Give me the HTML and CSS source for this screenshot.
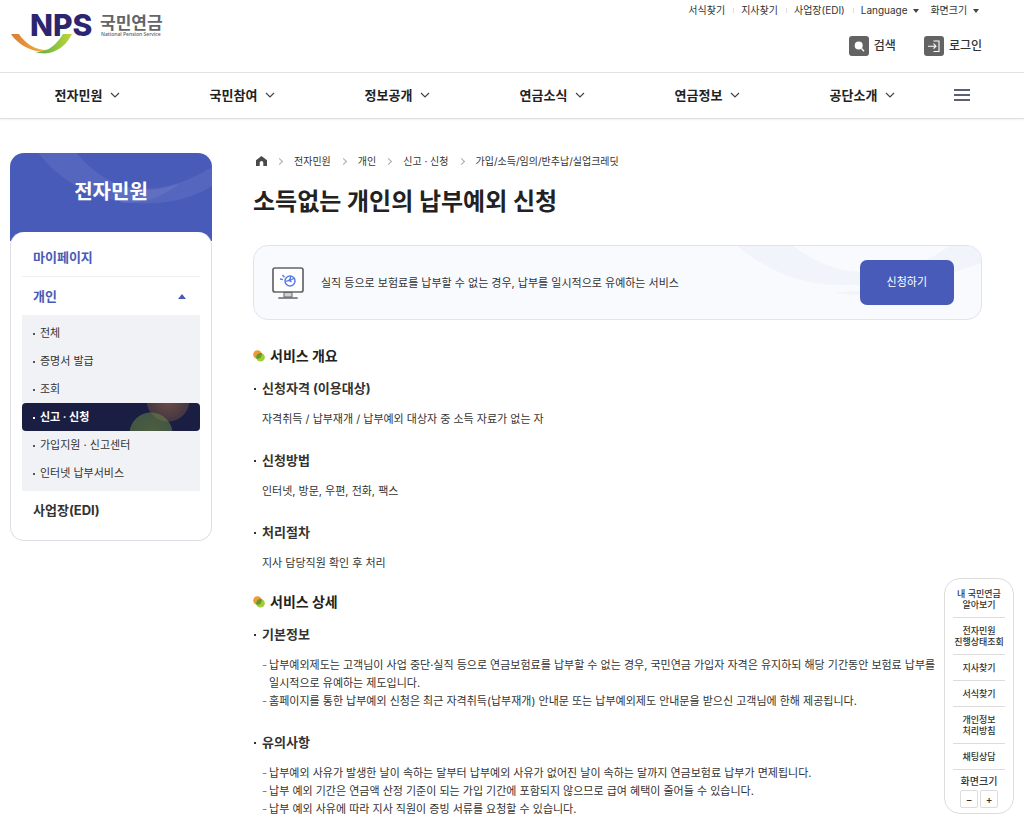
FILE: index.html
```html
<!DOCTYPE html>
<html lang="ko">
<head>
    <meta charset="UTF-8">
    <meta name="viewport" content="width=device-width, initial-scale=1.0">
    <title>소득없는 개인의 납부예외 신청 | 국민연금</title>
    <link rel="stylesheet" href="styles.css">
</head>
<body>
    <header class="header">
        <div class="header-top">
            <a href="#" class="logo" aria-label="국민연금">
                <svg width="160" height="54" viewBox="0 0 160 54">
                    <defs>
                        <linearGradient id="orange"><stop offset="0" stop-color="#dd7a32"/><stop offset="1" stop-color="#f3bd42"/></linearGradient>
                        <linearGradient id="green"><stop offset="0" stop-color="#4fad45"/><stop offset="1" stop-color="#c0d63c"/></linearGradient>
                    </defs>
                    <path d="M1 32h8c6 9 16 17 31 16-4 2-9 2-14 1C15 46 6 40 1 32z" fill="url(#orange)"/>
                    <path d="M62 32h-9c-5 8-11 15-20 17-3 1-6 1-8 1 4 1 9 2 14 1 10-2 18-9 23-19z" fill="url(#green)"/>
                    <text class="logo-nps" x="20" y="34">NPS</text>
                    <text class="logo-name" x="90" y="27">국민연금</text>
                    <text class="logo-eng" x="91" y="34">National Pension Service</text>
                </svg>
            </a>
            <div class="header-side">
                <ul class="util">
                    <li><a href="#">서식찾기</a></li>
                    <li><a href="#">지사찾기</a></li>
                    <li><a href="#">사업장(EDI)</a></li>
                    <li><button type="button">Language <i class="caret"></i></button></li>
                    <li><button type="button">화면크기 <i class="caret"></i></button></li>
                </ul>
                <div class="member">
                    <button type="button">
                        <svg width="20" height="20" viewBox="0 0 20 20"><rect width="20" height="20" rx="3" fill="#636363"/><circle cx="9.700" cy="9.500" r="4" fill="#fff"/><path d="M12.500 12.500l2.500 2.700" stroke="#fff" stroke-width="1.300"/></svg>
                        검색
                    </button>
                    <a href="#">
                        <svg width="20" height="20" viewBox="0 0 20 20"><rect width="20" height="20" rx="3" fill="#636363"/><path d="M9.500 5h5.500v10.500H9.500M4 10.200h8M9.500 7.700l2.500 2.500-2.500 2.500" fill="none" stroke="#fff" stroke-width="1.100"/></svg>
                        로그인
                    </a>
                </div>
            </div>
        </div>
        <nav class="gnb">
            <a href="#">전자민원 <svg class="chevron" viewBox="0 0 10 6"><path d="M1 1l4 4 4-4"/></svg></a>
            <a href="#">국민참여 <svg class="chevron" viewBox="0 0 10 6"><path d="M1 1l4 4 4-4"/></svg></a>
            <a href="#">정보공개 <svg class="chevron" viewBox="0 0 10 6"><path d="M1 1l4 4 4-4"/></svg></a>
            <a href="#">연금소식 <svg class="chevron" viewBox="0 0 10 6"><path d="M1 1l4 4 4-4"/></svg></a>
            <a href="#">연금정보 <svg class="chevron" viewBox="0 0 10 6"><path d="M1 1l4 4 4-4"/></svg></a>
            <a href="#">공단소개 <svg class="chevron" viewBox="0 0 10 6"><path d="M1 1l4 4 4-4"/></svg></a>
            <button type="button" class="all-menu" aria-label="전체메뉴">
                <svg width="16" height="12" viewBox="0 0 16 12"><path d="M0 1h16M0 6h16M0 11h16" stroke="#262e42" stroke-width="1.500"/></svg>
            </button>
        </nav>
    </header>

    <div class="container">
        <!-- 좌측 메뉴 -->
        <aside class="lnb">
            <div class="lnb-title">
                <svg class="lnb-deco" viewBox="0 0 200 88" preserveAspectRatio="none"><path d="M28 0C56 37 104 56 156 49c18-3 34-9 44-16V14c-28 18-58 26-86 19C94 28 78 15 66 0z"/><path d="M110 50c28 0 44-8 58-20-22 10-50 9-70-1z"/></svg>
                <h2>전자민원</h2>
            </div>
            <div class="lnb-body">
                <a href="#" class="lnb-link blue">마이페이지</a>
                <a href="#" class="lnb-link blue open">개인 <i class="arrow-up"></i></a>
                <ul class="lnb-sub">
                    <li><a href="#">전체</a></li>
                    <li><a href="#">증명서 발급</a></li>
                    <li><a href="#">조회</a></li>
                    <li><a href="#" class="active">신고 · 신청</a></li>
                    <li><a href="#">가입지원 · 신고센터</a></li>
                    <li><a href="#">인터넷 납부서비스</a></li>
                </ul>
                <a href="#" class="lnb-link">사업장(EDI)</a>
            </div>
        </aside>

        <!-- 본문 -->
        <main class="content">
            <ol class="breadcrumb">
                <li><a href="#" aria-label="홈"><svg width="11" height="10" viewBox="0 0 11 10"><path d="M5.500 0L0 4.300V10h3.700V6.800a1.800 1.800 0 0 1 3.600 0V10H11V4.300z" fill="#4a4a4a"/></svg></a></li>
                <li><a href="#">전자민원</a></li>
                <li><a href="#">개인</a></li>
                <li><a href="#">신고 · 신청</a></li>
                <li><a href="#">가입/소득/임의/반추납/실업크레딧</a></li>
            </ol>
            <h1>소득없는 개인의 납부예외 신청</h1>

            <div class="apply-box">
                <svg class="apply-deco" viewBox="0 0 244 74"><path d="M0 0c30 24 64 39 102 39 58 0 102-6 142-22V0h-32c-20 16-50 26-84 26C100 26 76 15 56 0z"/><path d="M96 47q30-4 60 0-30 4-60 0z"/></svg>
                <svg width="32" height="32" viewBox="0 0 32 32" fill="none">
                    <rect x="1" y="1" width="30" height="24" rx="2" fill="#fff" stroke="#636569" stroke-width="1.700"/>
                    <path d="M12 25.500h8v4.500h-8z" fill="#cfd1d5" stroke="#636569"/>
                    <path d="M7 31h18" stroke="#636569" stroke-width="1.700" stroke-linecap="round"/>
                    <circle cx="18" cy="14" r="5" stroke="#5a7be4" stroke-width="1.500"/>
                    <path d="M13.500 14c3 .5 5.500-1.500 5-5M17 14l5.500-3M17.500 13.500l2 1.500M8 12l3 .6M10.500 8l2 2.200" stroke="#5a7be4" stroke-width="1.400"/>
                </svg>
                <p>실직 등으로 보험료를 납부할 수 없는 경우, 납부를 일시적으로 유예하는 서비스</p>
                <a href="#" class="apply-button">신청하기</a>
            </div>

            <section>
                <h2><svg class="dots" viewBox="0 0 12 12"><circle cx="4.500" cy="4.500" r="4.300" fill="#ec9a3a"/><circle cx="7.500" cy="7.200" r="4.300" fill="#a5cb3b"/><path d="M3.200 7.200a4.300 4.300 0 0 1 5.500-4.100 4.300 4.300 0 0 1-5.300 5.500z" fill="#5f9a2c"/></svg>서비스 개요</h2>
                <h3>신청자격 (이용대상)</h3>
                <p>자격취득 / 납부재개 / 납부예외 대상자 중 소득 자료가 없는 자</p>
                <h3>신청방법</h3>
                <p>인터넷, 방문, 우편, 전화, 팩스</p>
                <h3>처리절차</h3>
                <p>지사 담당직원 확인 후 처리</p>
            </section>

            <section>
                <h2><svg class="dots" viewBox="0 0 12 12"><circle cx="4.500" cy="4.500" r="4.300" fill="#ec9a3a"/><circle cx="7.500" cy="7.200" r="4.300" fill="#a5cb3b"/><path d="M3.200 7.200a4.300 4.300 0 0 1 5.500-4.100 4.300 4.300 0 0 1-5.300 5.500z" fill="#5f9a2c"/></svg>서비스 상세</h2>
                <h3>기본정보</h3>
                <ul class="dash-list">
                    <li>납부예외제도는 고객님이 사업 중단·실직 등으로 연금보험료를 납부할 수 없는 경우, 국민연금 가입자 자격은 유지하되 해당 기간동안 보험료 납부를 일시적으로 유예하는 제도입니다.</li>
                    <li>홈페이지를 통한 납부예외 신청은 최근 자격취득(납부재개) 안내문 또는 납부예외제도 안내문을 받으신 고객님에 한해 제공됩니다.</li>
                </ul>
                <h3>유의사항</h3>
                <ul class="dash-list">
                    <li>납부예외 사유가 발생한 날이 속하는 달부터 납부예외 사유가 없어진 날이 속하는 달까지 연금보험료 납부가 면제됩니다.</li>
                    <li>납부 예외 기간은 연금액 산정 기준이 되는 가입 기간에 포함되지 않으므로 급여 혜택이 줄어들 수 있습니다.</li>
                    <li>납부 예외 사유에 따라 지사 직원이 증빙 서류를 요청할 수 있습니다.</li>
                </ul>
            </section>
        </main>
    </div>

    <!-- 퀵메뉴 -->
    <aside class="quick">
        <a href="#">내 국민연금<br>알아보기</a>
        <a href="#">전자민원<br>진행상태조회</a>
        <a href="#">지사찾기</a>
        <a href="#">서식찾기</a>
        <a href="#">개인정보<br>처리방침</a>
        <a href="#">채팅상담</a>
        <div class="zoom">
            <span>화면크기</span>
            <div class="zoom-buttons">
                <button type="button" aria-label="축소">−</button>
                <button type="button" aria-label="확대">+</button>
            </div>
        </div>
    </aside>
</body>
</html>
```
FILE: styles.css
```css
* {
    box-sizing: border-box;
    margin: 0;
    padding: 0;
}
body {
    background-color: #fff;
    color: #333;
    font-family: Inter, "Noto Sans CJK KR", sans-serif;
    font-size: 11px;
    line-height: 18px;
    word-break: keep-all;
}
a {
    color: inherit;
    text-decoration: none;
}
ul,
ol {
    list-style: none;
}
button {
    border: none;
    background: none;
    color: inherit;
    font: inherit;
    cursor: pointer;
}

/* header */
.header {
    border-bottom: 1px solid #dedede;
    box-shadow: 0 1px 2px rgba(0, 0, 0, 0.06);
}
.header-top {
    display: flex;
    justify-content: space-between;
    align-items: flex-start;
    height: 72px;
    padding: 0 42px 0 10px;
}
.logo {
    margin-top: 2px;
}
.logo svg {
    display: block;
    overflow: visible;
}
.logo-nps {
    font-size: 30px;
    font-weight: 800;
    fill: #2b2670;
}
.logo-name {
    font-size: 17px;
    font-weight: 700;
    fill: #636569;
}
.logo-eng {
    font-family: "Open Sans", sans-serif;
    font-size: 5px;
    font-weight: 600;
    fill: #636569;
}
.header-side {
    display: flex;
    flex-direction: column;
    align-items: flex-end;
}
.util {
    display: flex;
    font-size: 10px;
    line-height: 20px;
}
.util li {
    display: flex;
    align-items: center;
}
.util li + li {
    margin-left: 8px;
    padding-left: 8px;
    background: linear-gradient(#ddd, #ddd) no-repeat left center / 1px 5px;
}
.util li:last-child {
    margin-left: 0;
    padding: 0 3px 0 11px;
    background: none;
}
.caret {
    display: inline-block;
    margin-left: 3px;
    border: 3px solid transparent;
    border-top: 4px solid #444;
    border-bottom: 0;
    vertical-align: middle;
}
.member {
    display: flex;
    gap: 28px;
    margin-top: 16px;
    font-size: 12px;
    font-weight: 500;
    line-height: 20px;
}
.member button,
.member a {
    display: flex;
    align-items: center;
    gap: 5px;
}
.gnb {
    display: grid;
    grid-template-columns: repeat(6, 1fr) 44px;
    height: 46px;
    padding: 0 40px 2px 10px;
    border-top: 1px solid #e2e2e2;
    color: #222;
    font-size: 13px;
    font-weight: 700;
}
.gnb a,
.gnb button {
    display: flex;
    justify-content: center;
    align-items: center;
    gap: 8px;
}
.chevron {
    width: 10px;
    height: 6px;
    fill: none;
    stroke: #444;
    stroke-width: 1.2;
}

.container {
    display: flex;
    align-items: flex-start;
    gap: 41px;
    padding: 34px 42px 0 10px;
}

/* left menu */
.lnb {
    flex: 0 0 202px;
}
.lnb-title {
    position: relative;
    height: 88px;
    padding-top: 24px;
    border-radius: 14px 14px 0 0;
    background-color: #485bb8;
    color: #fff;
    text-align: center;
    overflow: hidden;
}
.lnb-title h2 {
    position: relative;
    font-size: 20px;
    line-height: 30px;
}
.lnb-deco {
    position: absolute;
    top: 0;
    left: 0;
    width: 100%;
    height: 100%;
    fill: rgba(255, 255, 255, 0.07);
}
.lnb-body {
    position: relative;
    margin-top: -9px;
    padding: 6px 11px 11px;
    border: 1px solid #dedfe5;
    border-top: none;
    border-radius: 14px;
    background-color: #fff;
}
.lnb-link {
    display: flex;
    justify-content: space-between;
    align-items: center;
    height: 38px;
    padding: 0 14px 0 11px;
    font-size: 13px;
    font-weight: 700;
}
.blue {
    height: 39px;
    border-bottom: 1px solid #eee;
    color: #485bb8;
}
.open {
    height: 38px;
    border-bottom: none;
}
.arrow-up {
    border: 4px solid transparent;
    border-top: 0;
    border-bottom: 5px solid #485bb8;
}
.lnb-sub {
    padding: 4px 0;
    background-color: #f1f2f6;
}
.lnb-sub a {
    display: block;
    padding-left: 18px;
    line-height: 28px;
    background: linear-gradient(#555, #555) no-repeat 11px 14px / 2px 2px;
}
.lnb-sub .active {
    border-radius: 4px;
    background:
        linear-gradient(#fff, #fff) no-repeat 11px 14px / 2px 2px,
        radial-gradient(circle at 129px 31px, rgba(130, 160, 60, 0.5) 0, rgba(110, 140, 70, 0.5) 21px, transparent 22px),
        radial-gradient(circle at 146px -3px, rgba(190, 125, 70, 0.5) 0, rgba(170, 110, 70, 0.3) 21px, transparent 22px),
        #191e42;
    color: #fff;
    font-weight: 700;
}

/* content */
.content {
    flex: 1;
    min-width: 0;
}
.breadcrumb {
    display: flex;
    align-items: center;
    height: 16px;
    padding-left: 3px;
    font-size: 10px;
    line-height: 16px;
}
.breadcrumb li {
    display: flex;
    align-items: center;
}
.breadcrumb svg {
    display: block;
}
.breadcrumb li + li::before {
    content: "";
    width: 4px;
    height: 4px;
    margin: 0 12px 0 10px;
    border-top: 1px solid #aaa;
    border-right: 1px solid #aaa;
    transform: rotate(45deg);
}
h1 {
    margin-top: 15px;
    color: #222;
    font-size: 24px;
    line-height: 36px;
}
.apply-box {
    position: relative;
    display: flex;
    align-items: center;
    gap: 17px;
    min-height: 75px;
    margin: 25px 0 26px;
    padding: 14px 27px 14px 18px;
    border: 1px solid #dfe2f3;
    border-radius: 15px;
    background-color: #f9fafd;
    overflow: hidden;
}
.apply-deco {
    position: absolute;
    top: 0;
    right: 0;
    width: 244px;
    height: 74px;
    fill: #f1f4fa;
}
.apply-box p {
    flex: 1;
}
.apply-button {
    position: relative;
    padding: 0 27px;
    border-radius: 7px;
    background-color: #485bb8;
    color: #fff;
    line-height: 45px;
}
section + section {
    margin-top: 20px;
}
section h2 {
    display: flex;
    align-items: center;
    gap: 5px;
    margin-bottom: 12px;
    color: #222;
    font-size: 14px;
    font-weight: 700;
    line-height: 20px;
}
.dots {
    width: 12px;
    height: 12px;
}
section h3 {
    margin-bottom: 12px;
    padding-left: 9px;
    background: linear-gradient(#333, #333) no-repeat 1px 10px / 2px 2px;
    font-size: 13px;
    font-weight: 700;
    line-height: 20px;
}
section p {
    padding-left: 9px;
}
section p + h3,
section ul + h3 {
    margin-top: 22px;
}
.dash-list {
    padding: 0 36px 0 9px;
}
.dash-list li {
    display: flex;
    gap: 2px;
}
.dash-list li::before {
    content: "-";
    color: #777;
}

/* quick menu */
.quick {
    position: fixed;
    right: 10px;
    bottom: 10px;
    width: 70px;
    padding: 2px 8px 5px;
    border: 1px solid #dcdcdc;
    border-radius: 16px;
    background-color: #fff;
    font-size: 9px;
    font-weight: 500;
    line-height: 11px;
    text-align: center;
    white-space: nowrap;
}
.quick a {
    display: flex;
    justify-content: center;
    padding: 7px 0;
    border-bottom: 1px solid #dcdcdc;
}
.zoom {
    padding-top: 6px;
    font-size: 10px;
}
.zoom-buttons {
    display: flex;
    justify-content: center;
    gap: 2px;
    margin-top: 3px;
}
.zoom-buttons button {
    width: 18px;
    height: 18px;
    border: 1px solid #dcdcdc;
    border-radius: 2px;
}
```
